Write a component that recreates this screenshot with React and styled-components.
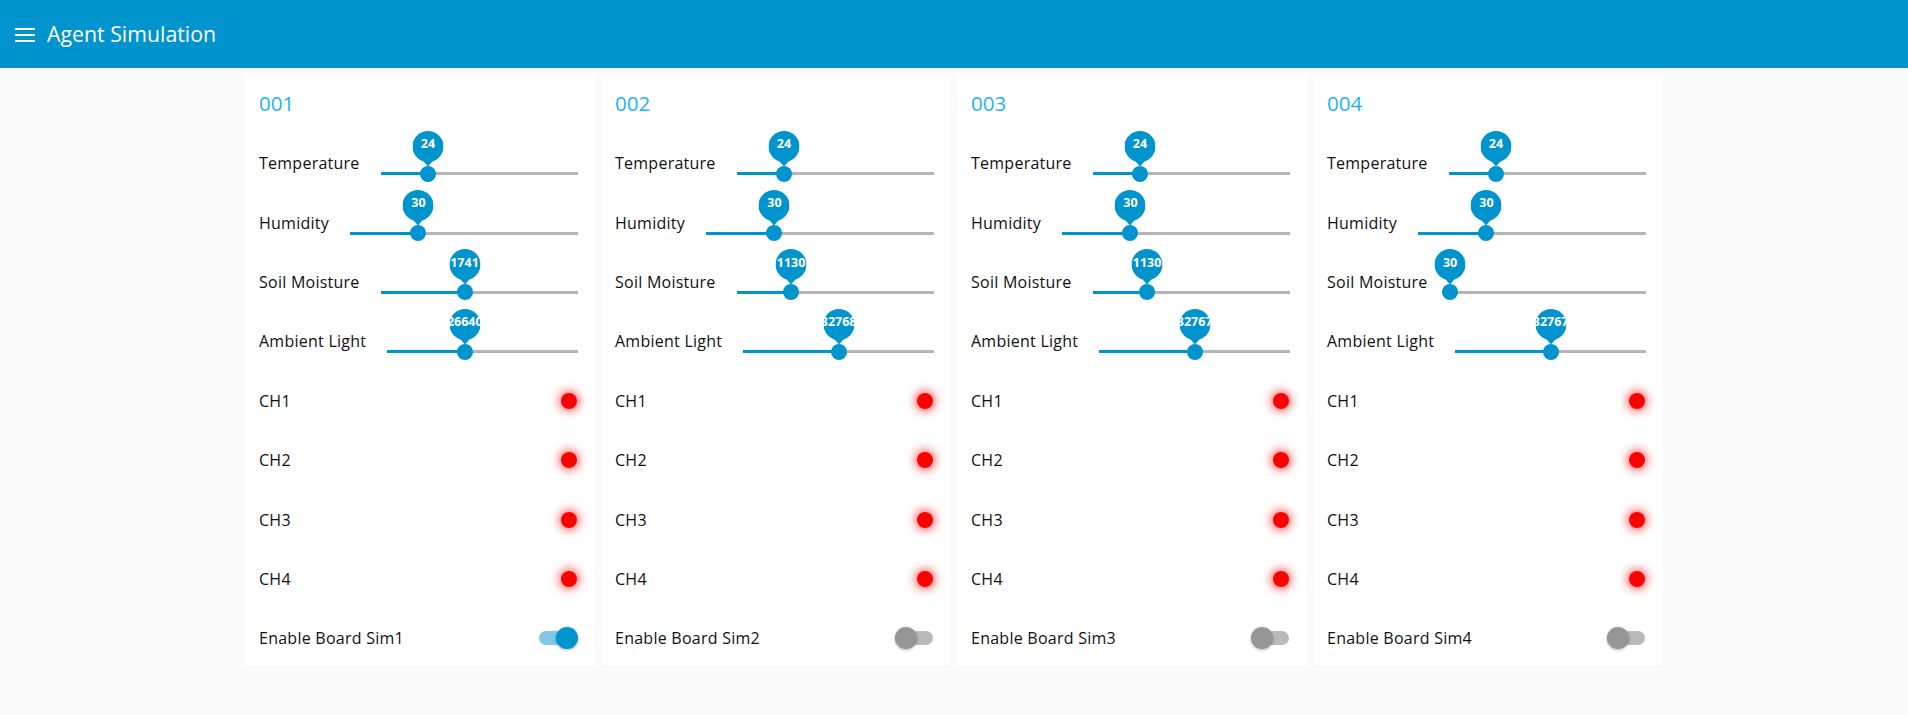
import React from "react";
import styled, { createGlobalStyle } from "styled-components";

const GlobalStyle = createGlobalStyle`
  html, body { margin: 0; padding: 0; background: #fafafa; }
  body { font-family: "Open Sans", "Noto Sans", sans-serif; color: #111; }
  * { box-sizing: border-box; }
`;

const Page = styled.div`
  min-height: 715px;
  background: #fafafa;
`;

const Header = styled.header`
  height: 68px;
  background: #0094ce;
  color: #fff;
  display: flex;
  align-items: center;
  padding-left: 15px;
  gap: 12px;
`;

const HeaderTitle = styled.h1`
  margin: 0;
  font-size: 21.3px;
  font-weight: 400;
  line-height: 1;
`;

const MenuIcon = styled.svg`
  width: 20px;
  height: 14px;
  display: block;
  margin-top: 1px;
`;

const Main = styled.main`
  display: flex;
  justify-content: center;
  gap: 6px;
  padding-top: 7px;
`;

const Card = styled.section`
  width: 350px;
  background: #fff;
  display: grid;
  grid-template-rows: 55.5px repeat(9, 53.4px);
  row-gap: 6px;
  padding: 0 17px 0 14px;
`;

const CardTitle = styled.h2`
  margin: 0;
  display: flex;
  align-items: center;
  font-size: 20.5px;
  font-weight: 400;
  color: #1db4f5;
`;

const Row = styled.div`
  display: flex;
  align-items: center;
  justify-content: space-between;
  font-size: 16px;
  white-space: nowrap;
`;

const Label = styled.span`
  flex: none;
  letter-spacing: 0.25px;
`;

const Slider = styled.div`
  position: relative;
  flex: 1;
  align-self: stretch;
  margin-left: 21px;
`;

const Track = styled.div`
  position: absolute;
  left: 0;
  right: 0;
  top: 35.7px;
  height: 3px;
  background: #b5b5b5;
`;

const Fill = styled.div`
  position: absolute;
  left: 0;
  top: 35.7px;
  height: 3px;
  background: #0094ce;
`;

const Thumb = styled.div`
  position: absolute;
  top: 37.2px;
  width: 16px;
  height: 16px;
  border-radius: 50%;
  background: #0094ce;
  transform: translate(-50%, -50%);
`;

const Pin = styled.div`
  position: absolute;
  top: -6px;
  width: 31px;
  height: 36px;
  transform: translateX(-50%);
  svg { display: block; }
`;

const PinText = styled.span`
  position: absolute;
  left: 50%;
  top: 13.5px;
  transform: translate(-50%, -50%);
  color: #fff;
  font-size: 12.5px;
  font-weight: 700;
  line-height: 1;
  white-space: nowrap;
`;

const Led = styled.span`
  width: 16px;
  height: 16px;
  margin-right: 1px;
  border-radius: 50%;
  background: #ff0000;
  box-shadow: 0 0 9px 3px rgba(255, 0, 0, 0.5);
`;

const Toggle = styled.span`
  position: relative;
  width: 39px;
  height: 24px;
  flex: none;
`;

const ToggleTrack = styled.span`
  position: absolute;
  left: 0;
  right: 1px;
  top: 5px;
  height: 14px;
  border-radius: 7px;
  background: ${(p) => (p.$on ? "#7fc9e6" : "#bababa")};
`;

const ToggleThumb = styled.span`
  position: absolute;
  top: 1px;
  ${(p) => (p.$on ? "right: 0;" : "left: 0;")}
  width: 22px;
  height: 22px;
  border-radius: 50%;
  background: ${(p) => (p.$on ? "#0094ce" : "#969696")};
  box-shadow: 0 1px 3px rgba(0, 0, 0, 0.3);
`;

function SliderField({ label, value, max }) {
  const pct = `${(value / max) * 100}%`;
  return (
    <Row>
      <Label>{label}</Label>
      <Slider>
        <Track />
        <Fill style={{ width: pct }} />
        <Pin style={{ left: pct }}>
          <svg width="31" height="36" viewBox="0 0 31 36">
            <circle cx="15.5" cy="15.5" r="15.5" fill="#0094ce" />
            <path d="M2 20 L29 20 L15.5 35.5 Z" fill="#0094ce" />
          </svg>
          <PinText>{value}</PinText>
        </Pin>
        <Thumb style={{ left: pct }} />
      </Slider>
    </Row>
  );
}

const boards = [
  { id: "001", t: 24, h: 30, s: 1741, a: 26640, on: true },
  { id: "002", t: 24, h: 30, s: 1130, a: 32768, on: false },
  { id: "003", t: 24, h: 30, s: 1130, a: 32767, on: false },
  { id: "004", t: 24, h: 30, s: 30, a: 32767, on: false },
];

export default function App() {
  return (
    <Page>
      <GlobalStyle />
      <Header>
        <MenuIcon viewBox="0 0 20 14">
          <rect x="0" y="0" width="20" height="2" fill="#fff" />
          <rect x="0" y="6" width="20" height="2" fill="#fff" />
          <rect x="0" y="12" width="20" height="2" fill="#fff" />
        </MenuIcon>
        <HeaderTitle>Agent Simulation</HeaderTitle>
      </Header>
      <Main>
        {boards.map((b, i) => (
          <Card key={b.id}>
            <CardTitle>{b.id}</CardTitle>
            <SliderField label="Temperature" value={b.t} max={100} />
            <SliderField label="Humidity" value={b.h} max={100} />
            <SliderField label="Soil Moisture" value={b.s} max={4095} />
            <SliderField label="Ambient Light" value={b.a} max={65535} />
            {["CH1", "CH2", "CH3", "CH4"].map((ch) => (
              <Row key={ch}>
                <Label>{ch}</Label>
                <Led />
              </Row>
            ))}
            <Row>
              <Label>Enable Board Sim{i + 1}</Label>
              <Toggle>
                <ToggleTrack $on={b.on} />
                <ToggleThumb $on={b.on} />
              </Toggle>
            </Row>
          </Card>
        ))}
      </Main>
    </Page>
  );
}
